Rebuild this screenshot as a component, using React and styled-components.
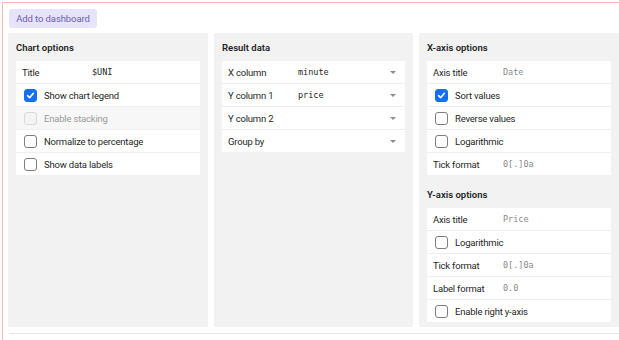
import React from 'react'
import styled, { createGlobalStyle } from 'styled-components'

const GlobalStyle = createGlobalStyle`
  html, body {
    margin: 0;
    padding: 0;
    overflow: hidden;
    background: #fff;
  }
  body {
    font-family: Roboto, "Liberation Sans", sans-serif;
    color: #1f1f1f;
  }
`

const Frame = styled.div`
  box-sizing: border-box;
  margin: 2px 0 0 2px;
  border-top: 1px solid #f6b9b0;
  border-left: 1px solid #f6b9b0;
  padding: 6px 0 0 5px;
  height: calc(100vh - 2px);
`

const DashButton = styled.button`
  display: block;
  margin-left: 1px;
  height: 19px;
  width: 88px;
  padding: 0;
  border: none;
  border-radius: 3px;
  background: #e7e4fa;
  color: #6a5fb3;
  font-family: Roboto, "Liberation Sans", sans-serif;
  font-size: 9.5px;
  letter-spacing: -0.1px;
  text-align: center;
`

const Columns = styled.div`
  display: grid;
  grid-template-columns: 200px 199px 200px;
  gap: 6px;
  margin-top: 5px;
`

const Panel = styled.div`
  background: #f2f2f2;
  padding: 8px;
  height: 294px;
  box-sizing: border-box;
`

const PanelTitle = styled.div`
  font-size: 9.5px;
  font-weight: 600;
  line-height: 14px;
  margin: ${p => (p.$first ? '0' : '13px')} 0 6px 0;
`

const Card = styled.div`
  background: #fff;
`

const Row = styled.div`
  display: flex;
  align-items: center;
  height: 22px;
  padding: 0 6px;
  font-size: 9.5px;
  letter-spacing: -0.2px;
  background: ${p => (p.$disabled ? '#f7f7f7' : '#fff')};
  color: ${p => (p.$disabled ? '#9a9a9a' : '#1f1f1f')};
  & + & {
    border-top: 1px solid #efefef;
  }
`

const Label = styled.span`
  width: 70px;
  flex: none;
`

const Value = styled.span`
  flex: 1;
  letter-spacing: 0;
  font-family: "DejaVu Sans Mono", "Liberation Mono", monospace;
  font-size: 8.5px;
  color: ${p => (p.$placeholder ? '#8a8a8a' : '#1f1f1f')};
`

const Caret = styled.span`
  width: 0;
  height: 0;
  margin-right: 3px;
  border-left: 3px solid transparent;
  border-right: 3px solid transparent;
  border-top: 3px solid #8c8c8c;
`

const Box = styled.span`
  box-sizing: border-box;
  width: 13px;
  height: 13px;
  margin: 0 7px 0 2px;
  border-radius: 3px;
  flex: none;
  display: flex;
  align-items: center;
  justify-content: center;
  border: 1px solid ${p => (p.$checked ? '#1570ef' : p.$disabled ? '#d9d9d9' : '#7d7d7d')};
  background: ${p => (p.$checked ? '#1570ef' : p.$disabled ? '#f4f4f4' : '#fff')};
`

const Divider = styled.div`
  height: 1px;
  background: #e6e6e6;
  margin-top: 6px;
  margin-left: 1px;
`

function Check({ label, checked, disabled }) {
  return (
    <Row $disabled={disabled}>
      <Box $checked={checked} $disabled={disabled}>
        {checked && (
          <svg width="9" height="9" viewBox="0 0 10 10">
            <path d="M1.8 5.2 L4 7.4 L8.2 2.6" fill="none" stroke="#fff" strokeWidth="1.8" strokeLinecap="round" strokeLinejoin="round" />
          </svg>
        )}
      </Box>
      {label}
    </Row>
  )
}

function Field({ label, value, placeholder }) {
  return (
    <Row>
      <Label>{label}</Label>
      <Value $placeholder={placeholder}>{value}</Value>
    </Row>
  )
}

function Select({ label, value }) {
  return (
    <Row>
      <Label>{label}</Label>
      <Value>{value}</Value>
      <Caret />
    </Row>
  )
}

export default function App() {
  return (
    <>
      <GlobalStyle />
      <Frame>
        <DashButton>Add to dashboard</DashButton>
        <Columns>
          <Panel>
            <PanelTitle $first>Chart options</PanelTitle>
            <Card>
              <Field label="Title" value="$UNI" />
              <Check label="Show chart legend" checked />
              <Check label="Enable stacking" disabled />
              <Check label="Normalize to percentage" />
              <Check label="Show data labels" />
            </Card>
          </Panel>
          <Panel>
            <PanelTitle $first>Result data</PanelTitle>
            <Card>
              <Select label="X column" value="minute" />
              <Select label="Y column 1" value="price" />
              <Select label="Y column 2" value="" />
              <Select label="Group by" value="" />
            </Card>
          </Panel>
          <Panel>
            <PanelTitle $first>X-axis options</PanelTitle>
            <Card>
              <Field label="Axis title" value="Date" placeholder />
              <Check label="Sort values" checked />
              <Check label="Reverse values" />
              <Check label="Logarithmic" />
              <Field label="Tick format" value="0[.]0a" placeholder />
            </Card>
            <PanelTitle>Y-axis options</PanelTitle>
            <Card>
              <Field label="Axis title" value="Price" placeholder />
              <Check label="Logarithmic" />
              <Field label="Tick format" value="0[.]0a" placeholder />
              <Field label="Label format" value="0.0" placeholder />
              <Check label="Enable right y-axis" />
            </Card>
          </Panel>
        </Columns>
        <Divider />
      </Frame>
    </>
  )
}
